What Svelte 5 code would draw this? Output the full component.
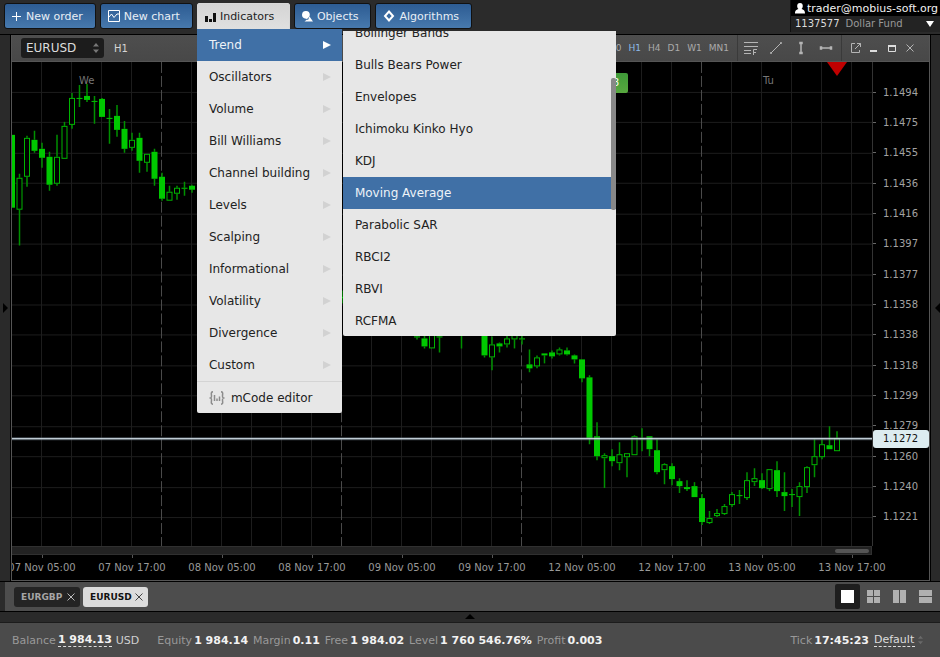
<script>
  // [x, high, body top, body bottom, low, filled]
  const candles = [
    [12, 134, 134, 207, 207, 1], [19.5, 173, 177, 209, 245, 0], [27, 135, 137, 176, 186, 0],
    [34.5, 130, 139, 150, 152, 1], [42, 142, 148, 157, 167, 1], [49.5, 151, 156, 184, 190, 1],
    [57, 134, 156, 183, 185, 0], [64.5, 121, 125, 158, 158, 0], [72, 92, 97, 124, 128, 0],
    [79.5, 84, 97, 98, 106, 1], [87, 83, 95, 99, 101, 1], [94.5, 95, 100, 101, 123, 1],
    [102, 97, 98, 116, 116, 1], [109.5, 108, 117, 118, 143, 1], [117, 104, 115, 129, 136, 1],
    [124.5, 120, 128, 148, 152, 1], [132, 132, 139, 147, 150, 0], [139.5, 132, 137, 160, 172, 1],
    [147, 153, 153, 162, 171, 0], [154.5, 148, 151, 178, 185, 1], [162, 172, 176, 198, 200, 1],
    [169.5, 185, 191, 200, 200, 0], [177, 185, 187, 193, 199, 0], [184.5, 181, 187, 188, 195, 1],
    [192, 184, 185, 189, 192, 1], [342, 290, 296, 298, 303, 1], [417, 330, 336, 337, 339, 1],
    [424.5, 334, 338, 346, 348, 1], [432, 330, 330, 348, 348, 0], [439.5, 330, 336, 337, 352, 1],
    [461.5, 330, 331, 332, 348, 1], [484.5, 330, 332, 355, 357, 1], [492, 336, 344, 357, 370, 0],
    [499.5, 342, 343, 346, 352, 1], [507, 335, 338, 344, 347, 0], [514.5, 330, 330, 339, 348, 0],
    [522, 335, 338, 339, 344, 1], [529.5, 349, 364, 368, 372, 1], [537, 355, 357, 366, 368, 0],
    [544.5, 353, 353, 355, 363, 1], [552, 350, 352, 356, 358, 1], [559.5, 347, 349, 354, 355, 0],
    [567, 347, 350, 354, 355, 1], [574.5, 354, 355, 359, 363, 1], [582, 359, 359, 378, 382, 1],
    [589.5, 375, 377, 438, 444, 1], [597, 422, 436, 456, 460, 1], [604.5, 453, 455, 458, 488, 0],
    [612, 449, 456, 461, 466, 1], [619.5, 442, 454, 463, 470, 0], [627, 453, 453, 457, 477, 0],
    [634.5, 435, 436, 455, 455, 0], [642, 428, 438, 439, 451, 1], [649.5, 436, 436, 449, 456, 1],
    [657, 439, 450, 472, 474, 1], [664.5, 463, 464, 470, 484, 0], [672, 463, 466, 479, 485, 1],
    [679.5, 478, 481, 486, 493, 1], [687, 480, 487, 489, 491, 1], [694.5, 482, 486, 497, 497, 1],
    [702, 494, 498, 522, 525, 1], [709.5, 511, 518, 523, 524, 0], [717, 509, 513, 516, 517, 0],
    [724.5, 504, 506, 514, 515, 0], [732, 492, 494, 505, 507, 0], [739.5, 490, 495, 496, 504, 1],
    [747, 472, 480, 498, 500, 0], [754.5, 468, 478, 482, 486, 0], [762, 473, 480, 488, 489, 1],
    [769.5, 469, 469, 489, 491, 0], [777, 461, 470, 491, 497, 1], [784.5, 472, 492, 496, 511, 1],
    [792, 489, 494, 495, 507, 1], [799.5, 482, 486, 497, 516, 0], [807, 466, 467, 487, 493, 0],
    [814.5, 439, 456, 465, 477, 0], [822, 439, 444, 457, 459, 0], [829.5, 426, 445, 449, 449, 1],
    [837, 431, 438, 451, 451, 0]
  ];
  const prices = ['1.1494', '1.1475', '1.1455', '1.1436', '1.1416', '1.1397', '1.1377', '1.1358',
    '1.1338', '1.1318', '1.1299', '1.1279', '1.1260', '1.1240', '1.1221'];
  const times = ['07 Nov 05:00', '07 Nov 17:00', '08 Nov 05:00', '08 Nov 17:00', '09 Nov 05:00',
    '09 Nov 17:00', '12 Nov 05:00', '12 Nov 17:00', '13 Nov 05:00', '13 Nov 17:00'];
  const columns = Array.from({ length: 28 }, (_, i) => 41.5 + i * 30);
  const groups = ['Trend', 'Oscillators', 'Volume', 'Bill Williams', 'Channel building', 'Levels',
    'Scalping', 'Informational', 'Volatility', 'Divergence', 'Custom'];
  const trend = ['Bollinger Bands', 'Bulls Bears Power', 'Envelopes', 'Ichimoku Kinko Hyo', 'KDJ',
    'Moving Average', 'Parabolic SAR', 'RBCI2', 'RBVI', 'RCFMA'];
  const periods = ['M30', 'H1', 'H4', 'D1', 'W1', 'MN1'];
  const layouts = [
    { name: 'Single', d: 'M0 0h13v13H0z' },
    { name: 'Grid', d: 'M0 0h6v6H0zM7 0h6v6H7zM0 7h6v6H0zM7 7h6v6H7z' },
    { name: 'Columns', d: 'M0 0h6v13H0zM7 0h6v13H7z' },
    { name: 'Rows', d: 'M0 0h13v6H0zM0 7h13v6H0z' }
  ];
  const stats = [
    ['Equity', '1 984.14'], ['Margin', '0.11'], ['Free', '1 984.02'],
    ['Level', '1 760 546.76%'], ['Profit', '0.003']
  ];
</script>

<div class="app">
  <header>
    <nav class="actions">
      <button><svg width="10" height="12" viewBox="0 0 10 12"><path d="M0 6.500h9M4.500 2v9" stroke="#fff" fill="none" /></svg>New order</button>
      <button><svg width="12" height="12" viewBox="0 0 12 12"><path d="M.5.5h11v11H.5zM1 7l2.500-3L6 7.500 9 4h2" stroke="#fff" fill="none" /></svg>New chart</button>
      <div class="anchor">
        <button class="open"><svg width="11" height="12" viewBox="0 0 11 12"><path d="M0 5h3v6H0zM4 8h3v3H4zM8 2h3v9H8z" fill="#111" /></svg>Indicators</button>
        <div class="menu">
          {#each groups as g, i}
            <button class="item" class:selected={i === 0}>{g}<svg width="8" height="8" viewBox="0 0 8 8"><path d="M0 0l8 4-8 4z" /></svg></button>
          {/each}
          <button class="item editor">
            <svg width="16" height="14" viewBox="0 0 16 14" fill="none" stroke="#8c8c8c" stroke-width="1.500"><path d="M4 .8C1.500.8 2.500 3 2.500 5S2 7 .5 7c1.500 0 2 0 2 2S1.500 13.200 4 13.200M12 .8c2.500 0 1.500 2.200 1.500 4.200s.5 2 2 2c-1.500 0-2 0-2 2s1 4.200-1.500 4.200M5.500 4v6M8 7.500V10M10.500 5.500V10" /></svg>
            mCode editor
          </button>
        </div>
        <div class="submenu">
          <div class="scrolled">
            {#each trend as t}
              <button class="item" class:selected={t === 'Moving Average'}>{t}</button>
            {/each}
          </div>
          <i class="thumb"></i>
        </div>
      </div>
      <button><svg width="11" height="12" viewBox="0 0 11 12"><path d="M4 1a3.800 3.800 0 0 1 3.800 3.800Q7.800 6 7 7L5 9 3 8.500A3.800 3.800 0 0 1 4 1zM7.500 6.500L11 11.500H2.500L5 9.500l1 .5z" fill="#fff" /></svg>Objects</button>
      <button><svg width="12" height="12" viewBox="0 0 12 12"><path d="M6 1.500L10 6 6 10.500 2 6z" fill="none" stroke="#fff" stroke-width="2" /></svg>Algorithms</button>
    </nav>
    <div class="account">
      <div class="mail"><svg width="10" height="11" viewBox="0 0 10 11"><path d="M5 0c4 0 3 5 1.500 6C9 7 10 7.500 10 10.500H0C0 7.500 1 7 3.500 6 2 5 1 0 5 0z" fill="#fff" /></svg>trader@mobius-soft.org</div>
      <button class="fund"><b>1137577</b> Dollar Fund<svg width="8" height="6" viewBox="0 0 8 6"><path d="M0 0h8L4 6z" fill="#fff" /></svg></button>
    </div>
  </header>

  <main>
    <button class="rail" aria-label="Show left panel"><svg width="6" height="10" viewBox="0 0 6 10"><path d="M0 0l5 5-5 5z" /></svg></button>
    <section class="window">
      <div class="toolbar">
        <span class="pick">
          <select aria-label="Symbol"><option>EURUSD</option></select>
          <svg width="6" height="10" viewBox="0 0 6 10"><path d="M0 3.500L3 0l3 3.500zM0 6.500L3 10l3-3.500z" fill="#777" /></svg>
        </span>
        <span class="current">H1</span>
        <div class="periods">
          {#each periods as p}<button class:on={p === 'H1'}>{p}</button>{/each}
        </div>
        <div class="tools">
          <button aria-label="Fibonacci"><svg width="14" height="14" viewBox="0 0 14 14"><path d="M0 1.500h14M0 5.500h14M0 9.500h7M0 12.500h7M9.500 14V8.500H13M9.500 11.500H12" /></svg></button>
          <button aria-label="Trend line"><svg width="14" height="14" viewBox="0 0 14 14"><path d="M2 12L12 2M1.500 11.500h1v1h-1zM11.500 1.500h1v1h-1z" /></svg></button>
          <button aria-label="Vertical line"><svg width="14" height="14" viewBox="0 0 14 14"><path d="M7 2v10M6 1.500h2v1H6zM6 11.500h2v1H6z" stroke-width="1.500" /></svg></button>
          <button aria-label="Horizontal line"><svg width="14" height="14" viewBox="0 0 14 14"><path d="M2 7h10M1.500 6v2h1V6zM11.500 6v2h1V6z" stroke-width="1.500" /></svg></button>
        </div>
        <div class="controls">
          <button aria-label="Detach"><svg width="12" height="12" viewBox="0 0 12 12"><path d="M5 1.500H1.500v9h8V8M7 1.500h3.500V5M10.500 1.500L5 7" /></svg></button>
          <button aria-label="Minimize"><svg width="12" height="12" viewBox="0 0 12 12"><path class="bar" d="M2 9h7" /></svg></button>
          <button aria-label="Maximize"><svg width="12" height="12" viewBox="0 0 12 12"><path class="frame" d="M2.500 3v6.500h7V3" /><path class="bar" d="M2 4h8" /></svg></button>
          <button aria-label="Close"><svg width="12" height="12" viewBox="0 0 12 12"><path d="M2.500 2.500l7 7M9.500 2.500l-7 7" /></svg></button>
        </div>
      </div>
      <div class="chart">
        <div class="plot">
          <svg viewBox="12 61 860 485" preserveAspectRatio="none" aria-hidden="true">
            {#each prices as _, i}
              <path class="grid" d="M12 {Math.round(91 + i * 30.430) + 0.5}h860" />
            {/each}
            {#each columns as x, i}
              {#if i % 6 === 4}
                <path class="day" d="M{x} 61v485" />
              {:else}
                <path class="grid" d="M{x} 61v485" />
              {/if}
            {/each}
            {#each candles as [x, high, top, bottom, low, filled]}
              <path class="wick" d="M{x} {high}V{top}M{x} {bottom}V{low}" />
              {#if filled}
                <rect class="full" x={x - 3} y={top} width="6" height={bottom - top} />
              {:else}
                <rect class="hollow" x={x - 2.5} y={top + 0.5} width="5" height={bottom - top - 1} />
              {/if}
            {/each}
            <path d="M12 438.500h860" stroke="#6d7a86" stroke-width="3" opacity=".6" />
            <path d="M12 438.500h860" stroke="#e6f2fa" />
            <path d="M827 61h20l-10 14z" fill="#c00000" />
          </svg>
          <span class="weekday we">We</span>
          <span class="weekday tu">Tu</span>
          <span class="badge">8</span>
        </div>
        <div class="prices">
          {#each prices as p}<span>{p}</span>{/each}
          <output class="last">1.1272</output>
        </div>
        <div class="scroller"><i></i></div>
      </div>
      <div class="times">
        {#each times as t}<span>{t}</span>{/each}
      </div>
    </section>
    <button class="rail right" aria-label="Show right panel"><svg width="6" height="10" viewBox="0 0 6 10"><path d="M6 0L1 5l5 5z" /></svg></button>
  </main>

  <div class="tabs">
    <div class="tab">EURGBP<button aria-label="Close EURGBP"><svg width="8" height="8" viewBox="0 0 8 8"><path d="M.5.5l7 7M7.500.5l-7 7" stroke="#bbb" /></svg></button></div>
    <div class="tab active">EURUSD<button aria-label="Close EURUSD"><svg width="8" height="8" viewBox="0 0 8 8"><path d="M.5.5l7 7M7.500.5l-7 7" stroke="#444" /></svg></button></div>
    <div class="layouts">
      {#each layouts as l, i}
        <button aria-label={l.name} class:on={i === 0}><svg width="13" height="13" viewBox="0 0 13 13"><path d={l.d} /></svg></button>
      {/each}
    </div>
  </div>
  <button class="drawer" aria-label="Expand"><svg width="10" height="5" viewBox="0 0 10 5"><path d="M0 5l5-5 5 5z" /></svg></button>
  <footer>
    <span class="stat balance">Balance <b class="dashed">1 984.13</b> <em>USD</em></span>
    {#each stats as [label, value]}<span class="stat">{label} <b>{value}</b></span>{/each}
    <span class="stat tick">Tick <b>17:45:23</b></span>
    <span class="profile">
      <select class="dashed" aria-label="Profile"><option>Default</option></select>
      <svg width="5" height="10" viewBox="0 0 6 10"><path d="M0 3.500L3 0l3 3.500zM0 6.500L3 10l3-3.500z" fill="#6a6a6a" /></svg>
    </span>
  </footer>
</div>

<style>
  :global(body) { background: #2a2a2a; }
  .app {
    display: flex; flex-direction: column; height: 100vh; min-height: 480px; overflow: hidden;
    font: 11px "DejaVu Sans", Verdana, sans-serif; color: #999; background: #2b2b2b; cursor: default;
  }
  .app *, .app *::before { box-sizing: border-box; }
  button, select { font: inherit; color: inherit; border: 0; background: none; padding: 0; margin: 0; }
  svg { display: block; flex: none; }

  header { display: flex; justify-content: space-between; height: 34px; background: #2b2b2b; }
  .actions { display: flex; gap: 4px; padding: 3px 4px; align-items: flex-start; }
  .actions > button, .open {
    display: flex; align-items: center; gap: 4px; height: 26px; padding: 0 12px 0 7px; white-space: nowrap;
    color: #e8eef5; background: linear-gradient(#2d5c93, #4779ad); border: 1px solid #111; border-radius: 3px;
  }
  .anchor { position: relative; }
  .open { min-width: 93px; height: 27px; color: #222; background: linear-gradient(#d4d4d4, #e0e0e0); border-color: #d8d8d8; border-radius: 2px 2px 0 0; }
  .menu, .submenu { position: absolute; z-index: 5; background: #e7e7e7; font-size: 12px; }
  .menu { top: 26px; left: 0; width: 145px; border-radius: 0 0 2px 2px; }
  .submenu { top: 28px; left: 146px; width: 273px; height: 305px; overflow: hidden; border-radius: 0 0 2px 2px; }
  .scrolled { margin-top: -14px; }
  .item {
    display: flex; align-items: center; justify-content: space-between; width: 100%; height: 32px;
    padding: 0 11px 0 12px; color: #222; white-space: nowrap;
  }
  .item path { fill: #d2d2d2; }
  .item.selected { color: #eef3f8; background: #4070a6; }
  .item.selected path { fill: #fff; }
  .editor { justify-content: flex-start; gap: 6px; border-top: 1px solid #d4d4d4; }
  .editor path { fill: none; }
  .thumb { position: absolute; top: 47px; right: 0; width: 5px; height: 132px; background: #888; border-radius: 2px; }

  .account { width: 150px; height: 32px; background: #232323; border-left: 1px solid #111; }
  .mail { display: flex; align-items: center; gap: 2px; height: 16px; padding-left: 4px; background: #000; color: #f2f2f2; white-space: nowrap; }
  .fund { display: flex; align-items: center; gap: 6px; width: 100%; height: 15px; padding: 0 6px 0 4px; font-size: 10px; }
  .fund b { font-weight: 400; color: #ddd; }
  .fund svg { margin-left: auto; }

  main { flex: 1; display: flex; min-height: 0; border-top: 1px solid #000; border-bottom: 1px solid #000; }
  .rail { width: 11px; display: flex; align-items: center; padding-left: 3px; background: #2a2a2a; border-right: 1px solid #000; }
  .right { width: 10px; justify-content: flex-end; padding: 0; border-right: 0; border-left: 1px solid #000; }
  .window { flex: 1; min-width: 0; display: flex; flex-direction: column; background: #000; border: 1px solid #555; border-top: 0; }
  .toolbar { display: flex; align-items: center; height: 27px; padding-left: 9px; background: linear-gradient(#4e4e4e, #484848); border-bottom: 1px solid #555; font-size: 10px; }
  .pick { display: flex; align-items: center; width: 83px; height: 20px; padding: 0 5px; background: #1c1c1c; border-radius: 3px; }
  .pick select { appearance: none; flex: 1; min-width: 0; color: #ddd; font-size: 12px; }
  .current { margin: 0 auto 0 10px; color: #d5d5d5; }
  .periods { display: flex; gap: 7px; padding-right: 8px; font-size: 9px; color: #aaa; }
  .periods .on { color: #8ebbe8; }
  .tools, .controls { display: flex; align-items: center; height: 26px; border-left: 1px solid #3a3a3a; }
  .tools { gap: 11px; padding: 0 8px 0 6px; }
  .controls { gap: 6px; padding: 0 13px 0 8px; }
  .tools path, .controls path { fill: none; stroke: #b5b5b5; }
  .controls .frame { stroke: #ddd; }
  .controls .bar { stroke: #ddd; stroke-width: 2px; }

  .chart { flex: 1; min-height: 0; display: grid; grid-template-columns: 1fr 57px; grid-template-rows: 1fr 9px; }
  .plot { position: relative; display: flex; min-height: 0; min-width: 0; overflow: hidden; }
  .plot svg { flex: 1 1 0; min-width: 0; min-height: 0; }
  .grid { stroke: #1d1d1d; }
  .day { stroke: #4a4a4a; stroke-dasharray: 11 3; }
  .wick { stroke: #009000; stroke-width: 1.500px; }
  .full { fill: #00c800; }
  .hollow { fill: #000; stroke: #00b400; }
  .weekday { position: absolute; top: 13px; font-size: 10px; color: #777; }
  .we { left: 67px; }
  .tu { left: 751px; }
  .badge { position: absolute; top: 11px; left: 568px; width: 48px; height: 20px; padding: 4px 9px; text-align: right; font-size: 10px; color: #fff; background: linear-gradient(#3f9a38, #58a83f); border-radius: 2px; }
  .prices { position: relative; display: flex; flex-direction: column; padding: 15px 0 14px; border-left: 1px solid #333; font-size: 10px; color: #a2a2a2; }
  .prices span { flex: 1; display: flex; align-items: center; gap: 7px; }
  .prices span::before { content: ""; width: 3px; height: 1px; background: #666; }
  .last { position: absolute; top: 76%; left: 0; right: 0; height: 18px; padding-left: 10px; line-height: 18px; color: #111; background: #ddecf0; border-radius: 3px; }
  .scroller { display: flex; justify-content: flex-end; align-items: center; padding-right: 2px; background: #222; border: 1px solid #303030; border-left: 0; }
  .scroller i { width: 34px; height: 4px; background: #555; border-radius: 2px; }
  .times { display: flex; height: 25px; margin-left: -15px; padding-right: 32px; font-size: 10px; color: #999; clip-path: inset(0 0 0 15px); }
  .times span { flex: 1; display: flex; flex-direction: column; align-items: center; gap: 4px; white-space: nowrap; }
  .times span::before { content: ""; width: 1px; height: 3px; background: #555; }

  .tabs { display: flex; align-items: center; gap: 3px; height: 29px; padding-left: 9px; margin-left: 5px; background: #4d4d4d; }
  .tab { display: flex; align-items: center; justify-content: space-between; width: 66px; height: 20px; padding: 0 5px 0 7px; background: #242424; border-radius: 3px; font-size: 9px; font-weight: 700; color: #a5a5a5; }
  .active { width: 65px; color: #111; background: #dcdcdc; }
  .layouts { display: flex; gap: 1px; margin-left: auto; padding-right: 2px; }
  .layouts button { display: grid; place-items: center; width: 25px; height: 25px; border-radius: 2px; }
  .layouts path { fill: #b0b0b0; }
  .layouts .on { background: #1e1e1e; }
  .layouts .on path { fill: #fff; }
  .drawer { display: flex; justify-content: center; align-items: flex-start; height: 12px; padding-top: 2px; background: #2a2a2a; border-top: 1px solid #000; border-bottom: 1px solid #1c1c1c; }
  footer { display: flex; align-items: center; gap: 5px; height: 34px; padding: 0 17px 0 12px; background: #4b4b4b; white-space: nowrap; }
  .stat { display: flex; align-items: center; gap: 2px; }
  .stat b { color: #f2f2f2; }
  .stat em { font-style: normal; color: #d0d0d0; margin-left: 2px; }
  .balance { margin-right: 13px; }
  .dashed { border-bottom: 1px dashed #ddd; }
  .tick { margin-left: auto; }
  .profile { display: flex; align-items: center; gap: 3px; }
  .profile select { appearance: none; color: #ddd; }
</style>
